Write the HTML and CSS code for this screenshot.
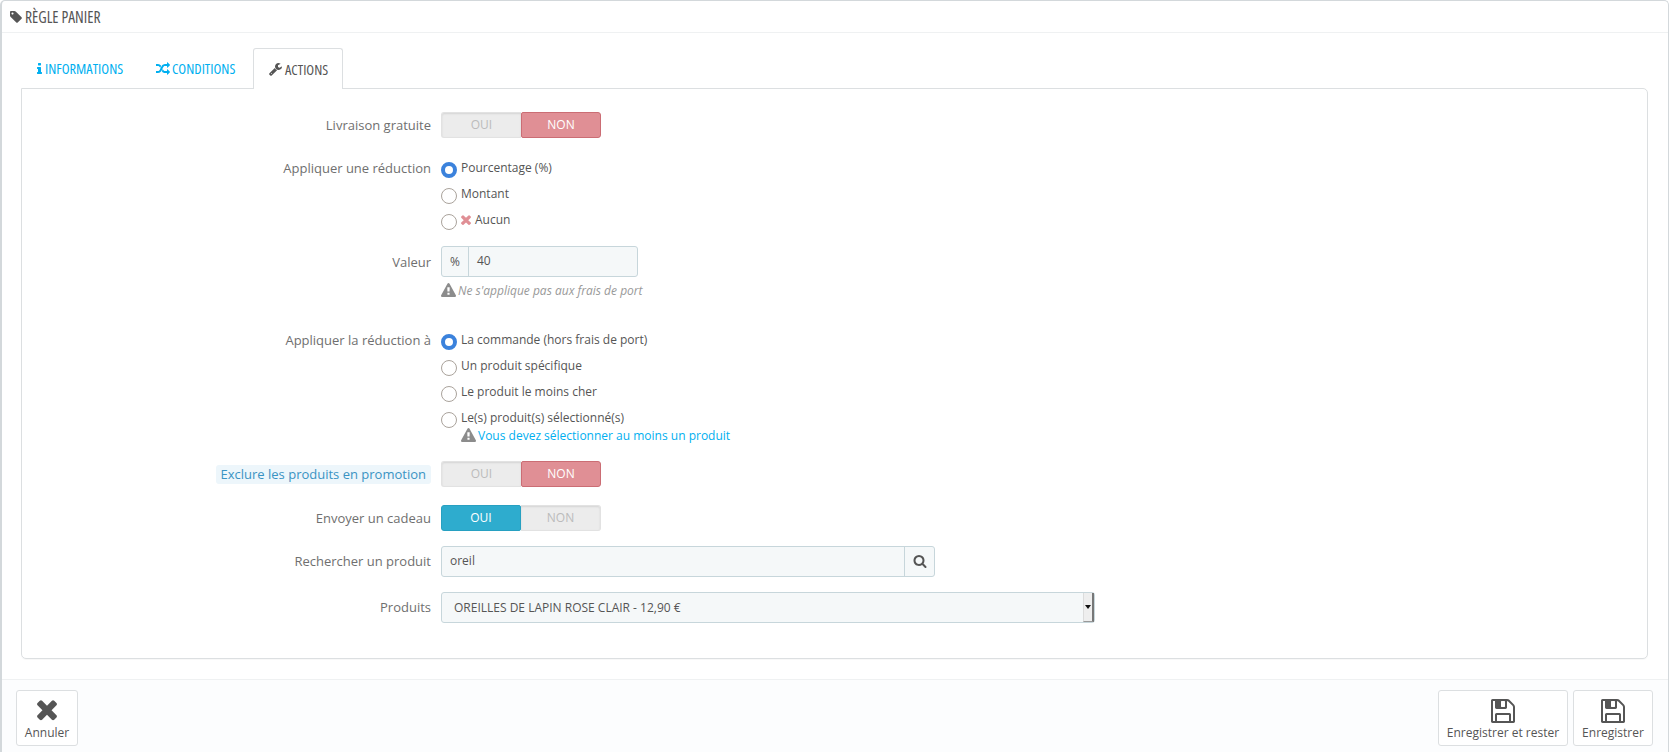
FILE: index.html
```html
<!DOCTYPE html>
<html lang="fr">
<head>
<meta charset="utf-8">
<title>Règle panier</title>
<link rel="stylesheet" href="styles.css">
</head>
<body>
<svg class="sprite" aria-hidden="true">
  <symbol id="i-tag" viewBox="0 0 1664 1792"><path d="M576 448q0-53-37.500-90.500t-90.500-37.500-90.500 37.500-37.500 90.500 37.500 90.500 90.500 37.500 90.500-37.500 37.500-90.500zm1067 576q0 53-37 90l-491 492q-39 37-91 37-53 0-90-37l-715-716q-38-37-64.500-101t-26.500-117v-416q0-52 38-90t90-38h416q53 0 117 26.500t102 64.500l715 714q37 39 37 91z"/></symbol>
  <symbol id="i-info" viewBox="0 0 640 1792"><path d="M640 1344v128q0 26-19 45t-45 19h-512q-26 0-45-19t-19-45v-128q0-26 19-45t45-19h64v-384h-64q-26 0-45-19t-19-45v-128q0-26 19-45t45-19h384q26 0 45 19t19 45v576h64q26 0 45 19t19 45zm-128-1152v192q0 26-19 45t-45 19h-256q-26 0-45-19t-19-45v-192q0-26 19-45t45-19h256q26 0 45 19t19 45z"/></symbol>
  <symbol id="i-random" viewBox="0 0 1792 1792"><path d="M666 481q-60 92-137 273-22-45-37-72.500t-40.500-63.500-51-56.500-63-35-81.500-14.500h-224q-14 0-23-9t-9-23v-192q0-14 9-23t23-9h224q250 0 410 225zm1126 799q0 14-9 23l-320 320q-9 9-23 9-13 0-22.500-9.500t-9.500-22.500v-192q-32 0-85 .5t-81 1-73-1-71-5-64-10.500-63-18.500-58-28.500-59-40-55-53.500-56-69.500q59-93 136-273 22 45 37 72.500t40.500 63.500 51 56.500 63 35 81.500 14.500h256v-192q0-14 9-23t23-9q12 0 24 10l319 319q9 9 9 23zm0-896q0 14-9 23l-320 320q-9 9-23 9-13 0-22.500-9.500t-9.500-22.500v-192h-256q-48 0-87 15t-69 45-51 61.500-45 77.500q-32 62-78 171-29 66-49.500 111t-54 105-64 100-74 83-90 68.500-106.500 42-128 16.500h-224q-14 0-23-9t-9-23v-192q0-14 9-23t23-9h224q48 0 87-15t69-45 51-61.500 45-77.500q32-62 78-171 29-66 49.500-111t54-105 64-100 74-83 90-68.500 106.500-42 128-16.500h256v-192q0-14 9-23t23-9q12 0 24 10l319 319q9 9 9 23z"/></symbol>
  <symbol id="i-wrench" viewBox="0 0 1664 1792"><path d="M384 1472q0-26-19-45t-45-19-45 19-19 45 19 45 45 19 45-19 19-45zm644-420l-682 682q-37 37-90 37-52 0-91-37l-106-108q-38-36-38-90 0-53 38-91l681-681q39 98 114.500 173.500t173.500 114.500zm634-435q0 39-23 106-47 134-164.500 217.500t-258.500 83.500q-185 0-316.500-131.500t-131.500-316.500 131.500-316.500 316.500-131.500q58 0 121.500 16.500t107.500 46.500q16 11 16 28t-16 28l-293 169v224l193 107q5-3 79-48.500t135.500-81 70.500-35.500q15 0 23.500 10t8.500 25z"/></symbol>
  <symbol id="i-times" viewBox="0 0 1408 1792"><path d="M1298 1214q0 40-28 68l-136 136q-28 28-68 28t-68-28l-294-294-294 294q-28 28-68 28t-68-28l-136-136q-28-28-28-68t28-68l294-294-294-294q-28-28-28-68t28-68l136-136q28-28 68-28t68 28l294 294 294-294q28-28 68-28t68 28l136 136q28 28 28 68t-28 68l-294 294 294 294q28 28 28 68z"/></symbol>
  <symbol id="i-warning" viewBox="0 0 1792 1792"><path d="M1024 1375v-190q0-14-9.500-23.500t-22.500-9.500h-192q-13 0-22.500 9.500t-9.500 23.500v190q0 14 9.500 23.500t22.500 9.500h192q13 0 22.500-9.500t9.500-23.500zm-2-374l18-459q0-12-10-19-13-11-24-11h-220q-11 0-24 11-10 7-10 21l17 457q0 10 10 16.500t24 6.500h185q14 0 23.500-6.500t10.500-16.500zm-14-934l768 1408q35 63-2 126-17 29-46.500 46t-63.500 17h-1536q-34 0-63.500-17t-46.500-46q-37-63-2-126l768-1408q17-31 47-49t65-18 65 18 47 49z"/></symbol>
  <symbol id="i-search" viewBox="0 0 1792 1792"><path d="M1216 832q0-185-131.500-316.500t-316.500-131.500-316.500 131.500-131.500 316.500 131.500 316.500 316.500 131.500 316.500-131.500 131.500-316.500zm512 832q0 52-38 90t-90 38q-54 0-90-38l-343-342q-179 124-399 124-143 0-273.500-55.500t-225-150-150-225-55.500-273.500 55.500-273.500 150-225 225-150 273.500-55.500 273.500 55.500 225 150 150 225 55.500 273.500q0 220-124 399l343 343q37 37 37 90z"/></symbol>
  <symbol id="i-save" viewBox="0 0 1792 1792"><path d="M512 1536h768v-384h-768v384zm896 0h128v-896q0-14-10-38.500t-20-34.500l-281-281q-10-10-34-20t-39-10v416q0 40-28 68t-68 28h-576q-40 0-68-28t-28-68v-416h-128v1280h128v-416q0-40 28-68t68-28h832q40 0 68 28t28 68v416zm-384-928v-320q0-13-9.500-22.500t-22.500-9.500h-192q-13 0-22.500 9.500t-9.500 22.500v320q0 13 9.500 22.500t22.500 9.500h192q13 0 22.500-9.500t9.500-22.500zm640 32v928q0 40-28 68t-68 28h-1344q-40 0-68-28t-28-68v-1344q0-40 28-68t68-28h928q40 0 88 20t76 48l280 280q28 28 48 76t20 88z"/></symbol>
</svg>

<main class="panel">
  <header class="panel-heading">
    <svg class="ico ico-tag"><use href="#i-tag"/></svg><span>RÈGLE PANIER</span>
  </header>

  <div class="panel-body">
    <nav class="tabs">
      <a class="tab tab-info"><svg class="ico ico-info"><use href="#i-info"/></svg>INFORMATIONS</a>
      <a class="tab tab-cond"><svg class="ico ico-random"><use href="#i-random"/></svg>CONDITIONS</a>
      <a class="tab tab-active"><svg class="ico ico-wrench"><use href="#i-wrench"/></svg>ACTIONS</a>
    </nav>

    <section class="tab-content">
      <div class="row row-free">
        <label class="lbl">Livraison gratuite</label>
        <div class="switch"><span class="sw sw-off">OUI</span><span class="sw sw-no">NON</span></div>
      </div>

      <div class="row row-reduc">
        <label class="lbl lbl-radio">Appliquer une réduction</label>
        <div class="radios">
          <label class="radio"><input type="radio" name="r1" checked><span>Pourcentage (%)</span></label>
          <label class="radio"><input type="radio" name="r1"><span>Montant</span></label>
          <label class="radio"><input type="radio" name="r1"><span class="with-ico"><svg class="ico ico-x"><use href="#i-times"/></svg>Aucun</span></label>
        </div>
      </div>

      <div class="row row-val">
        <label class="lbl">Valeur</label>
        <div class="field-col">
          <div class="input-group w-value">
            <span class="addon">%</span>
            <span class="inp">40</span>
          </div>
          <p class="help"><svg class="ico ico-warn"><use href="#i-warning"/></svg>Ne s'applique pas aux frais de port</p>
        </div>
      </div>

      <div class="row row-apply">
        <label class="lbl lbl-radio">Appliquer la réduction à</label>
        <div class="radios">
          <label class="radio"><input type="radio" name="r2" checked><span>La commande (hors frais de port)</span></label>
          <label class="radio"><input type="radio" name="r2"><span>Un produit spécifique</span></label>
          <label class="radio"><input type="radio" name="r2"><span>Le produit le moins cher</span></label>
          <label class="radio radio-tight"><input type="radio" name="r2"><span>Le(s) produit(s) sélectionné(s)</span></label>
          <p class="warn-link"><svg class="ico ico-warn"><use href="#i-warning"/></svg>Vous devez sélectionner au moins un produit</p>
        </div>
      </div>

      <div class="row row-excl">
        <label class="lbl"><span class="hint">Exclure les produits en promotion</span></label>
        <div class="switch"><span class="sw sw-off">OUI</span><span class="sw sw-no">NON</span></div>
      </div>

      <div class="row row-gift">
        <label class="lbl">Envoyer un cadeau</label>
        <div class="switch"><span class="sw sw-yes">OUI</span><span class="sw sw-off">NON</span></div>
      </div>

      <div class="row row-search">
        <label class="lbl">Rechercher un produit</label>
        <div class="input-group w-search">
          <span class="inp">oreil</span>
          <span class="addon addon-search"><svg class="ico ico-search"><use href="#i-search"/></svg></span>
        </div>
      </div>

      <div class="row row-prod">
        <label class="lbl">Produits</label>
        <div class="listbox">
          <span class="option">OREILLES DE LAPIN ROSE CLAIR - 12,90 €</span>
          <span class="scroll"></span>
        </div>
      </div>
    </section>
  </div>

  <footer class="panel-footer">
    <a class="btn btn-cancel"><svg class="ico ico-btn-x"><use href="#i-times"/></svg>Annuler</a>
    <div class="footer-right">
      <a class="btn btn-stay"><svg class="ico ico-btn"><use href="#i-save"/></svg>Enregistrer et rester</a>
      <a class="btn btn-save"><svg class="ico ico-btn"><use href="#i-save"/></svg>Enregistrer</a>
    </div>
  </footer>
</main>
</body>
</html>
```

FILE: styles.css
```css
* { box-sizing: border-box; }
html, body { margin: 0; padding: 0; }
body {
  width: 1669px;
  height: 752px;
  overflow: hidden;
  background: #fff;
  font-family: "Open Sans", sans-serif;
  font-size: 12px;
  color: #555;
}
.sprite { display: none; }
.ico { display: inline-block; fill: currentColor; flex: none; }

.panel {
  height: 752px;
  border: 1px solid #d3d8db;
  border-bottom: 0;
  border-left-width: 2px;
  border-radius: 5px 5px 0 0;
  display: flex;
  flex-direction: column;
  background: #fff;
}
.panel-heading {
  height: 32px;
  border-bottom: 1px solid #eff1f2;
  padding-left: 7px;
  display: flex;
  align-items: center;
  font-family: "Open Sans", sans-serif;
  font-stretch: 75%;
  font-size: 15.5px;
  color: #555;
}
.ico-tag { width: 13px; height: 14px; margin-right: 3px; }

.panel-body {
  flex: 1;
  padding: 15px 20px 0 19px;
}
.tabs {
  display: flex;
  height: 41px;
  padding-left: 1px;
  position: relative;
  z-index: 1;
  font-family: "Open Sans", sans-serif;
  font-stretch: 75%;
  font-size: 14.4px;
}
.tab {
  display: flex;
  align-items: center;
  height: 41px;
  color: #00aff0;
}
.tab-info { width: 118px; padding-left: 15px; }
.tab-cond { width: 113px; padding-left: 16px; }
.tab-active {
  width: 90px;
  padding-left: 15px;
  color: #555;
  background: #fff;
  border: 1px solid #dcdfe1;
  border-bottom: 0;
  border-radius: 3px 3px 0 0;
}
.ico-info { width: 5px; height: 14px; margin-right: 3px; }
.ico-random { width: 14px; height: 14px; margin-right: 2px; }
.ico-wrench { width: 13px; height: 14px; margin-right: 3px; }

.tab-content {
  height: 571px;
  margin-top: -1px;
  border: 1px solid #dcdfe1;
  border-radius: 0 5px 5px 5px;
  padding-top: 23px;
  box-shadow: 0 1px 1px rgba(0,0,0,.03);
}
.row {
  display: flex;
  gap: 10px;
  align-items: flex-start;
}
.row-reduc { margin-top: 19px; }
.row-val { margin-top: 11px; }
.row-apply { margin-top: 30px; }
.row-excl { margin-top: 17px; }
.row-gift { margin-top: 18px; }
.row-search { margin-top: 15px; }
.row-prod { margin-top: 15px; }

.lbl {
  width: 409px;
  flex: none;
  text-align: right;
  font-size: 13px;
  line-height: 26px;
  color: #6f6f6f;
}
.lbl-radio { line-height: 22px; }
.row-val .lbl { line-height: 32px; }
.row-search .lbl, .row-prod .lbl { line-height: 30px; }
.hint {
  display: inline-block;
  line-height: 19px;
  padding: 0 5px;
  color: #3a93c3;
  background: #edf6fb;
  border-radius: 3px;
}

.switch {
  display: flex;
  width: 160px;
  height: 26px;
  font-size: 12px;
}
.sw {
  flex: 0 0 80px;
  display: flex;
  align-items: center;
  justify-content: center;
  padding-bottom: 2px;
}
.sw-off {
  background: #ececec;
  color: #bbb;
  border: 1px solid #e2e2e2;
  box-shadow: inset 0 1px 2px rgba(0,0,0,.1);
}
.sw-off:first-child { border-radius: 3px 0 0 3px; border-right: 0; }
.sw-off:last-child { border-radius: 0 3px 3px 0; border-left: 0; }
.sw-no {
  background: #e08f95;
  color: #fff;
  border: 1px solid #cb6d74;
  border-radius: 2px 3px 3px 2px;
}
.sw-yes {
  background: #2eacce;
  color: #fff;
  border: 1px solid #27a0c1;
  border-radius: 3px 2px 2px 3px;
}

.radios { display: flex; flex-direction: column; }
.radio {
  display: flex;
  align-items: flex-start;
  height: 26px;
  font-size: 12px;
  line-height: 22px;
  color: #555;
}
.radio-tight { height: 19px; }
.radio input {
  appearance: none;
  width: 16px;
  height: 16px;
  margin: 5px 4px 0 0;
  border: 1px solid #aaa39c;
  border-radius: 50%;
  background: #fff;
  flex: none;
}
.radio input:checked { border: 4px solid #3b82dc; }
.with-ico { display: flex; align-items: center; height: 22px; }
.ico-x { width: 12px; height: 15px; margin: 0 3px 0 -1px; color: #e08f95; }

.field-col { display: flex; flex-direction: column; }
.input-group {
  display: flex;
  height: 31px;
  background: #f5f8f9;
  border: 1px solid #c7d6db;
  border-radius: 3px;
}
.w-value { width: 197px; }
.w-search { width: 494px; }
.addon {
  width: 27px;
  flex: none;
  display: flex;
  align-items: center;
  justify-content: center;
  border-right: 1px solid #c7d6db;
  font-size: 12px;
  padding-bottom: 1px;
}
.addon-search {
  width: 30px;
  border-right: 0;
  border-left: 1px solid #c7d6db;
}
.inp {
  flex: 1;
  display: flex;
  align-items: center;
  padding: 0 8px 2px;
  font-size: 12px;
}
.ico-search { width: 14px; height: 14px; color: #555; }
.help {
  margin: 4px 0 0;
  height: 18px;
  display: flex;
  align-items: center;
  font-size: 12px;
  font-style: italic;
  color: #999;
}
.ico-warn { width: 15px; height: 15px; margin-right: 2px; color: #8c8c8c; }
.warn-link {
  margin: 0;
  padding-left: 20px;
  height: 18px;
  display: flex;
  align-items: center;
  font-size: 12px;
  color: #00aff0;
}

.listbox {
  width: 654px;
  height: 31px;
  display: flex;
  justify-content: space-between;
  background: #f5f8f9;
  border: 1px solid #c7d6db;
  border-radius: 3px;
}
.option {
  padding: 0 12px 1px;
  display: flex;
  align-items: center;
  font-size: 12px;
}
.scroll {
  width: 11px;
  position: relative;
  background: #eeeeee;
  border-left: 1px solid #dcdcdc;
  border-right: 2px solid #777;
  border-bottom: 1px solid #999;
}
.scroll::after {
  content: "";
  position: absolute;
  left: 1px;
  top: 12px;
  border-left: 3.5px solid transparent;
  border-right: 3.5px solid transparent;
  border-top: 4px solid #111;
}

.panel-footer {
  height: 73px;
  border-top: 1px solid #eff1f2;
  background: #fcfdfe;
  padding: 10px 15px 0 14px;
  display: flex;
  justify-content: space-between;
  align-items: flex-start;
}
.footer-right { display: flex; gap: 5px; }
.btn {
  height: 56px;
  background: #fff;
  border: 1px solid #dcdfe1;
  border-radius: 3px;
  display: flex;
  flex-direction: column;
  align-items: center;
  padding-top: 6px;
  font-size: 12px;
  line-height: 16px;
  color: #555;
}
.btn-cancel { width: 62px; }
.btn-stay { width: 130px; }
.btn-save { width: 80px; }
.ico-btn { width: 28px; height: 28px; }
.ico-btn-x { width: 24px; height: 30px; margin: -1px 0; }
```
